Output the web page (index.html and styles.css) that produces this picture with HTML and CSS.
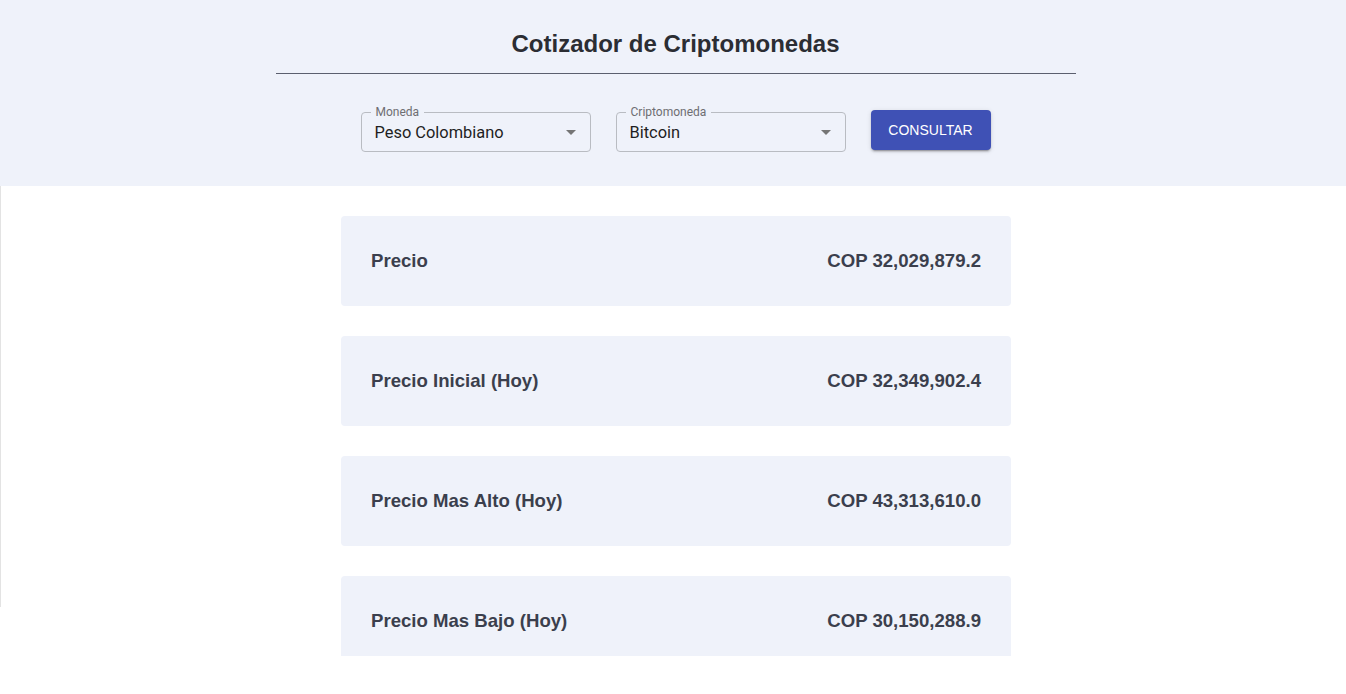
FILE: index.html
```html
<!DOCTYPE html>
<html lang="es">
<head>
<meta charset="utf-8">
<title>Cotizador de Criptomonedas</title>
<link rel="stylesheet" href="styles.css">
</head>
<body>
<header class="top">
  <h1 class="title">Cotizador de Criptomonedas</h1>
  <div class="rule"></div>
  <form class="form">
    <div class="field">
      <span class="label">Moneda</span>
      <span class="value">Peso Colombiano</span>
      <svg class="arrow" width="10" height="5" viewBox="0 0 10 5"><path d="M0 0L5 5L10 0Z" fill="#757575"/></svg>
    </div>
    <div class="field">
      <span class="label">Criptomoneda</span>
      <span class="value">Bitcoin</span>
      <svg class="arrow" width="10" height="5" viewBox="0 0 10 5"><path d="M0 0L5 5L10 0Z" fill="#757575"/></svg>
    </div>
    <button type="button" class="btn">CONSULTAR</button>
  </form>
</header>
<main class="results">
  <div class="edge"></div>
  <div class="list">
    <div class="card"><span>Precio</span><span>COP 32,029,879.2</span></div>
    <div class="card"><span>Precio Inicial (Hoy)</span><span>COP 32,349,902.4</span></div>
    <div class="card"><span>Precio Mas Alto (Hoy)</span><span>COP 43,313,610.0</span></div>
    <div class="card"><span>Precio Mas Bajo (Hoy)</span><span>COP 30,150,288.9</span></div>
  </div>
</main>
</body>
</html>
```
FILE: styles.css
```css
html, body { margin: 0; padding: 0; background: #fff; }
body { font-family: "Liberation Sans", Arial, sans-serif; }
.top {
  background: #eff2fa;
  height: 186px;
  box-sizing: border-box;
  padding-top: 30px;
  padding-left: 5px;
  display: flex;
  flex-direction: column;
  align-items: center;
}
.title {
  margin: 0;
  font-size: 24px;
  line-height: 28px;
  font-weight: bold;
  color: #2b2d33;
}
.rule {
  width: 800px;
  height: 1px;
  background: #5b5f6e;
  margin-top: 15px;
}
.form {
  display: flex;
  align-items: flex-start;
  gap: 25px;
  margin-top: 36px;
  margin-left: 0;
}
.field {
  position: relative;
  width: 230px;
  height: 40px;
  box-sizing: border-box;
  border: 1px solid #b9bcc2;
  border-radius: 4px;
  margin-top: 2px;
  display: flex;
  align-items: center;
  padding-left: 13px;
  font-family: Roboto, "Liberation Sans", sans-serif;
}
.label {
  position: absolute;
  top: -8px;
  left: 9px;
  padding: 0 5px;
  background: #eff2fa;
  font-size: 12px;
  line-height: 14px;
  color: #6e6e72;
}
.value {
  font-size: 16.4px;
  color: #1e1e22;
  margin-top: 1px;
}
.arrow {
  position: absolute;
  right: 14px;
  top: 17px;
}
.btn {
  width: 120px;
  height: 40px;
  border: 0;
  border-radius: 4px;
  background: #3f51b5;
  color: #fff;
  font-family: "Liberation Sans", Arial, sans-serif;
  font-size: 14px;
  padding: 0;
  box-shadow: 0 3px 1px -2px rgba(0,0,0,.2), 0 2px 2px 0 rgba(0,0,0,.14), 0 1px 5px 0 rgba(0,0,0,.12);
}
.results {
  position: relative;
  height: 470px;
  overflow: hidden;
  padding-left: 6px;
}
.edge {
  position: absolute;
  left: 0;
  top: 0;
  width: 1px;
  height: 421px;
  background: #e3e3e3;
}
.list {
  width: 670px;
  margin: 30px auto 0;
  display: flex;
  flex-direction: column;
  gap: 30px;
}
.card {
  height: 90px;
  flex: none;
  background: #eff2fa;
  border-radius: 4px;
  display: flex;
  align-items: center;
  justify-content: space-between;
  padding: 0 30px;
  box-sizing: border-box;
  font-size: 18.6px;
  font-weight: bold;
  color: #3b3f4d;
}
```
